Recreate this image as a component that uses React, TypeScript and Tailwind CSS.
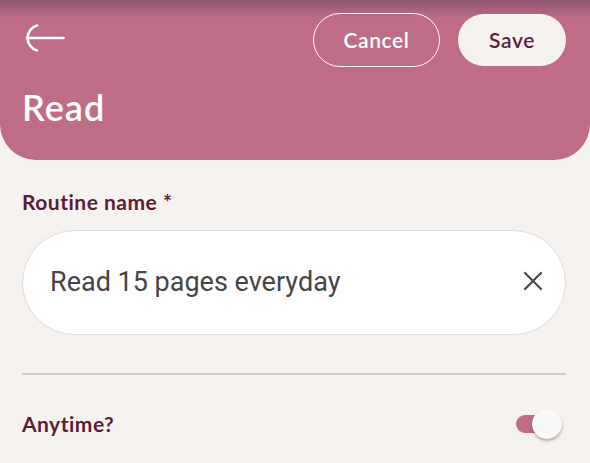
import React, { useState } from 'react';

const BackArrow: React.FC = () => (
  <svg width="40" height="28" viewBox="0 0 40 28" fill="none" stroke="white" strokeWidth="2.6" strokeLinecap="round">
    <path d="M12 1.5 A13 13 0 0 0 12 26.5" />
    <path d="M2 14 H38.5" />
  </svg>
);

const ClearIcon: React.FC = () => (
  <svg width="20" height="20" viewBox="0 0 20 20" fill="none" stroke="#454545" strokeWidth="2" strokeLinecap="square">
    <path d="M2 2 L18 18 M18 2 L2 18" />
  </svg>
);

const App: React.FC = () => {
  const [name, setName] = useState('Read 15 pages everyday');
  const [anytime, setAnytime] = useState(true);

  return (
    <div className="min-h-[463px] w-[590px] bg-[#f6f2ef] font-['Lato',sans-serif]">
      {/* Header */}
      <header className="relative h-[160px] rounded-b-[36px] bg-[#bf6d87] pt-[13px] pl-[25px] pr-[24px] overflow-hidden">
        <div className="pointer-events-none absolute inset-x-0 top-0 h-[18px] bg-gradient-to-b from-[#8f5570] to-[#bf6d87]/0" />
        <div className="relative flex h-[54px] items-center justify-between">
          <button className="-mt-[4px]">
            <BackArrow />
          </button>
          <div className="flex items-center gap-[18px]">
            <button className="h-[54px] w-[127px] rounded-full border-[1.5px] border-white text-[21px] font-semibold tracking-[0.6px] text-white">
              Cancel
            </button>
            <button className="h-[52px] w-[108px] rounded-full bg-[#f6f2f0] text-[21px] font-semibold tracking-[0.6px] text-[#5b1f3a]">
              Save
            </button>
          </div>
        </div>
        <h1 className="relative mt-[18px] -ml-[3px] text-[36px] leading-[44px] font-semibold tracking-[1px] text-white">Read</h1>
      </header>

      {/* Form */}
      <div className="pl-[22px] pr-[24px]">
        <label className="mt-[28px] block text-[21px] leading-[28px] font-bold tracking-[0.5px] text-[#5c1c36]">
          Routine name *
        </label>
        <div className="mt-[14px] flex h-[105px] items-center rounded-full border border-[#dfdbd7] bg-white pl-[27px] pr-[22px]">
          <input
            value={name}
            onChange={(e) => setName(e.target.value)}
            className="flex-1 bg-transparent font-['Roboto',sans-serif] text-[27px] text-[#454545] outline-none"
          />
          <button onClick={() => setName('')} className="ml-2 -mt-[4px]">
            <ClearIcon />
          </button>
        </div>

        <div className="mt-[38px] h-[2px] bg-[#d1ccc8]" />

        <div className="mt-[34px] flex items-center justify-between">
          <span className="text-[21px] leading-[28px] font-bold tracking-[0.5px] text-[#5c1c36]">Anytime?</span>
          <button
            onClick={() => setAnytime(!anytime)}
            className="relative mr-[4px] h-[30px] w-[48px]"
          >
            <span className="absolute left-[2px] top-[6px] h-[18px] w-[36px] rounded-full bg-[#bf6d87]" />
            <span className="absolute right-0 top-0 h-[30px] w-[30px] rounded-full bg-[#f8f8f8] shadow-[0_2px_3px_rgba(0,0,0,0.3)]" />
          </button>
        </div>
      </div>
    </div>
  );
};

export default App;
